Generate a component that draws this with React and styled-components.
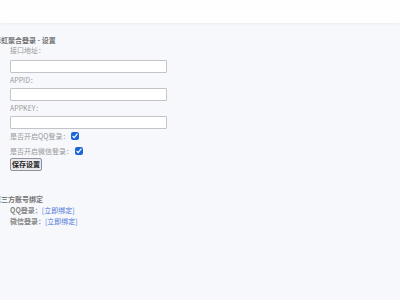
import React from "react";
import styled, { createGlobalStyle } from "styled-components";

const GlobalStyle = createGlobalStyle`
  html, body {
    margin: 0;
    padding: 0;
    background: #f7f8fc;
    font-family: "Noto Sans CJK SC", "Noto Sans", "Liberation Sans", sans-serif;
  }
`;

const Page = styled.div`
  width: 400px;
  height: 300px;
  overflow: hidden;
  background: #f7f8fc;
`;

const Header = styled.div`
  height: 23px;
  background: #fefefe;
  box-shadow: 0 1px 3px rgba(0, 0, 0, 0.05);
`;

const Main = styled.div`
  padding: 12px 0 0 10px;
  font-size: 7px;
  line-height: 10px;
  color: #999;
`;

const SectionTitle = styled.div`
  margin-left: -16px;
  margin-top: ${(p) => p.$top || 0}px;
  font-weight: bold;
  color: #737373;
`;

const Label = styled.div`
  color: #999;
`;

const TextInput = styled.input`
  display: block;
  box-sizing: border-box;
  width: 157px;
  height: 13px;
  margin: ${(p) => p.$top || 3}px 0 2px;
  padding: 0 3px;
  border: 1px solid #c4c4c8;
  border-radius: 1px;
  background: #fff;
  font-size: 7px;
  outline: none;
`;

const CheckRow = styled.label`
  display: flex;
  align-items: center;
  height: 10px;
  margin-bottom: ${(p) => p.$bottom || 0}px;
  color: #999;
`;

const Check = styled.input`
  width: 8px;
  height: 8px;
  margin: 0 0 0 2px;
  accent-color: #1a66d9;
`;

const SaveButton = styled.button`
  display: block;
  box-sizing: border-box;
  height: 13px;
  margin-top: 2px;
  padding: 0 1px;
  border: 1px solid #8f8f9d;
  border-radius: 2px;
  background: #e9e9ed;
  color: #222;
  font-family: inherit;
  font-size: 7px;
  font-weight: bold;
  line-height: 11px;
`;

const BindRow = styled.div`
  display: flex;
  align-items: center;
  height: 11px;
`;

const BindName = styled.span`
  font-weight: bold;
  color: #888;
`;

const BindLink = styled.a`
  color: #4a76d8;
  text-decoration: none;
  cursor: pointer;
`;

export default function App() {
  return (
    <Page>
      <GlobalStyle />
      <Header />
      <Main>
        <SectionTitle>彩虹聚合登录 - 设置</SectionTitle>
        <Label>接口地址：</Label>
        <TextInput $top={5} />
        <Label>APPID：</Label>
        <TextInput />
        <Label>APPKEY：</Label>
        <TextInput />
        <CheckRow $bottom={5}>
          是否开启QQ登录：
          <Check type="checkbox" defaultChecked />
        </CheckRow>
        <CheckRow>
          是否开启微信登录：
          <Check type="checkbox" defaultChecked />
        </CheckRow>
        <SaveButton>保存设置</SaveButton>
        <SectionTitle $top={23}>第三方账号绑定</SectionTitle>
        <BindRow>
          <BindName>QQ登录：</BindName>
          <BindLink>[立即绑定]</BindLink>
        </BindRow>
        <BindRow>
          <BindName>微信登录：</BindName>
          <BindLink>[立即绑定]</BindLink>
        </BindRow>
      </Main>
    </Page>
  );
}
